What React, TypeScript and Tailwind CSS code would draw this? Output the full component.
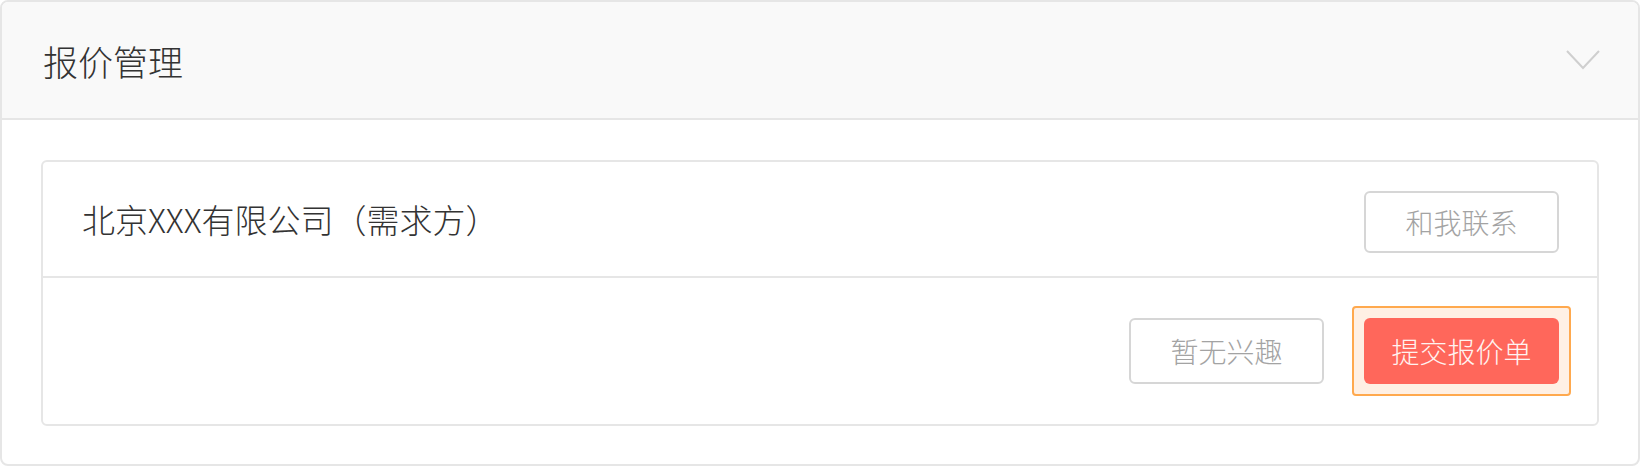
export default function App() {
  return (
    <div className="w-[1640px] h-[466px] bg-white" style={{ fontFamily: '"Noto Sans CJK SC", "Noto Sans", sans-serif' }}>
      <div className="flex flex-col h-full border-2 border-[#e6e6e6] rounded-[8px] overflow-hidden">
        <div className="flex items-center justify-between h-[118px] flex-shrink-0 bg-[#f9f9f9] border-b-2 border-[#e6e6e6] pl-[41px] pr-[38px]">
          <span className="text-[35px] font-light text-[#333] leading-none">报价管理</span>
          <svg width="34" height="20" viewBox="0 0 34 20" fill="none">
            <polyline points="1,1 17,18 33,1" stroke="#cfcfcf" strokeWidth="2" />
          </svg>
        </div>

        <div className="flex-1 px-[39px] pt-[40px] pb-[38px]">
          <div className="flex flex-col h-full border-2 border-[#e6e6e6] rounded-[6px]">
            <div className="flex items-center justify-between h-[116px] flex-shrink-0 pl-[39px] pr-[38px] border-b-2 border-[#e6e6e6]">
              <span className="text-[33px] font-light text-[#333] leading-none">北京XXX有限公司（需求方）</span>
              <button className="mt-[6px] w-[195px] h-[62px] border-2 border-[#d6d6d6] rounded-[6px] text-[28px] font-light text-[#a3a3a3] bg-white">
                和我联系
              </button>
            </div>

            <div className="flex flex-1 items-center justify-end gap-[28px] pr-[26px]">
              <button className="w-[195px] h-[66px] border-2 border-[#d6d6d6] rounded-[6px] text-[28px] font-light text-[#a3a3a3] bg-white">
                暂无兴趣
              </button>
              <div className="p-[10px] border-2 border-[#ffa94e] bg-[#fff0e4] rounded-[4px]">
                <button className="block w-[195px] h-[66px] rounded-[6px] bg-[#ff675b] text-[28px] font-light text-[#fff3f0]">
                  提交报价单
                </button>
              </div>
            </div>
          </div>
        </div>
      </div>
    </div>
  )
}
